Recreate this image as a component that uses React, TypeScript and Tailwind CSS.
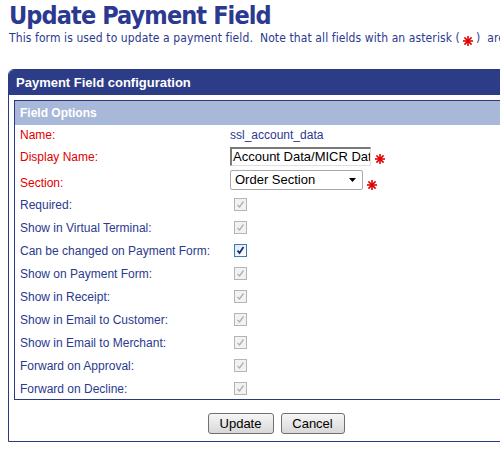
import React from "react";

const TAHOMA = { fontFamily: '"DejaVu Sans Condensed", "DejaVu Sans", sans-serif' };
const ARIAL = { fontFamily: '"Liberation Sans", Arial, sans-serif' };

function Star({ className = "" }: { className?: string }) {
  return (
    <svg width="10" height="10" viewBox="0 0 10 10" className={"shrink-0 " + className}>
      <g stroke="#e00000" strokeWidth="1.6" strokeLinecap="square">
        <line x1="5" y1="0.8" x2="5" y2="9.2" />
        <line x1="0.8" y1="5" x2="9.2" y2="5" />
        <line x1="2" y1="2" x2="8" y2="8" />
        <line x1="8" y1="2" x2="2" y2="8" />
      </g>
    </svg>
  );
}

function Check({ checked, disabled }: { checked: boolean; disabled: boolean }) {
  if (disabled) {
    return (
      <div className="ml-[4px] w-[13px] h-[13px] border border-[#b5b5b5] bg-[#f2f2f2] flex items-center justify-center">
        {checked && (
          <svg width="9" height="9" viewBox="0 0 9 9">
            <path d="M1.5 5 L3.5 7 L7.5 1.5" fill="none" stroke="#b0b0b0" strokeWidth="1.3" />
          </svg>
        )}
      </div>
    );
  }
  return (
    <div className="ml-[4px] w-[13px] h-[13px] border border-[#3d7bad] bg-gradient-to-br from-[#d8e8f6] to-[#ffffff] flex items-center justify-center">
      <svg width="9" height="9" viewBox="0 0 9 9">
        <path d="M1.5 4.5 L3.5 7 L7.5 1" fill="none" stroke="#1b2a78" strokeWidth="1.8" />
      </svg>
    </div>
  );
}

const rows: { label: string; checked: boolean; disabled: boolean }[] = [
  { label: "Required:", checked: true, disabled: true },
  { label: "Show in Virtual Terminal:", checked: true, disabled: true },
  { label: "Can be changed on Payment Form:", checked: true, disabled: false },
  { label: "Show on Payment Form:", checked: true, disabled: true },
  { label: "Show in Receipt:", checked: true, disabled: true },
  { label: "Show in Email to Customer:", checked: true, disabled: true },
  { label: "Show in Email to Merchant:", checked: true, disabled: true },
  { label: "Forward on Approval:", checked: true, disabled: true },
  { label: "Forward on Decline:", checked: true, disabled: true },
];

export default function App() {
  return (
    <div className="w-[500px] h-[453px] overflow-hidden bg-white relative" style={ARIAL}>
      <h1
        className="ml-[9px] pt-[1px] text-[25px] leading-[30px] font-bold tracking-[-0.9px] text-[#2b3990] whitespace-nowrap"
        style={TAHOMA}
      >
        Update Payment Field
      </h1>
      <p className="ml-[9px] text-[12px] leading-[15px] tracking-[0.1px] text-[#2b3990] whitespace-nowrap flex items-center" style={TAHOMA}>
        <span className="shrink-0">This form is used to update a payment field.&nbsp; Note that all fields with an asterisk (</span>
        <Star className="mx-[3px] mt-[4px]" />
        <span className="shrink-0">)&nbsp; are required.</span>
      </p>

      <div className="ml-[8px] mt-[23px] w-[536px] border border-[#2b3a80] rounded-tl-[6px]">
        <div className="h-[25px] bg-[#2d3c87] rounded-tl-[5px] flex items-center pl-[7px] text-white font-bold text-[13px]">
          Payment Field configuration
        </div>
        <div className="ml-[5px] mr-[5px] mt-[5px] border border-[#2b3a80]">
          <div className="h-[24px] bg-[#a8b8d8] flex items-center pl-[5px] text-white font-bold text-[12px]">
            Field Options
          </div>
          <div className="pl-[5px] text-[12px]">
            <div className="h-[20px] flex items-center">
              <div className="w-[210px] text-[#e00000]">Name:</div>
              <div className="text-[#2b3990] text-[12px]">ssl_account_data</div>
            </div>
            <div className="h-[22px] flex items-center">
              <div className="w-[210px] text-[#e00000] mt-[1px]">Display Name:</div>
              <div className="flex items-center">
                <div className="w-[141px] h-[19px] border-t-2 border-l-2 border-t-[#7a7a7a] border-l-[#7a7a7a] border-r border-b border-r-[#e0e0e0] border-b-[#e0e0e0] bg-white overflow-hidden flex items-center pl-[1px] text-[13px] text-black whitespace-nowrap">
                  Account Data/MICR Data
                </div>
                <Star className="ml-[4px] mt-[6px]" />
              </div>
            </div>
            <div className="h-[26px] flex items-center">
              <div className="w-[210px] text-[#e00000] mt-[5px]">Section:</div>
              <div className="flex items-center">
                <div className="w-[133px] h-[20px] border border-[#a9a9a9] rounded-[2px] bg-white flex items-center justify-between pl-[4px] pr-[6px] text-[13px] text-black">
                  <span>Order Section</span>
                  <svg width="7" height="4" viewBox="0 0 7 4">
                    <path d="M0 0 H7 L3.5 4 Z" fill="#000" />
                  </svg>
                </div>
                <Star className="ml-[4px] mt-[9px]" />
              </div>
            </div>
            {rows.map((r, i) => (
              <div key={r.label} className={i === rows.length - 1 ? "h-[22px] flex items-center" : "h-[23px] flex items-center"}>
                <div className="w-[210px] text-[#2b3990] mt-[1px]">{r.label}</div>
                <Check checked={r.checked} disabled={r.disabled} />
              </div>
            ))}
          </div>
        </div>
        <div className="pt-[13px] pb-[7px] flex justify-center gap-[7px]">
          <button className="w-[66px] h-[21px] border border-[#707070] rounded-[3px] bg-gradient-to-b from-[#f6f6f6] to-[#d8d8d8] text-[13px] text-black leading-none">
            Update
          </button>
          <button className="w-[64px] h-[21px] border border-[#707070] rounded-[3px] bg-gradient-to-b from-[#f6f6f6] to-[#d8d8d8] text-[13px] text-black leading-none">
            Cancel
          </button>
        </div>
      </div>
    </div>
  );
}
